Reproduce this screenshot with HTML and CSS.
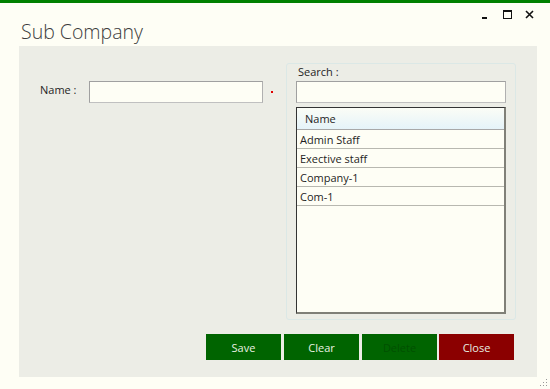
FILE: index.html
```html
<!DOCTYPE html>
<html lang="en">
<head>
    <meta charset="UTF-8">
    <title>Sub Company</title>
    <link rel="stylesheet" href="styles.css">
</head>
<body>
    <div class="window">
        <div class="titlebar">
            <span class="winbtn">
                <svg width="8" height="8" viewBox="0 0 8 8"><rect x="1" y="6" width="5" height="2" fill="#111"/></svg>
            </span>
            <span class="winbtn">
                <svg width="9" height="9" viewBox="0 0 9 9"><rect x="0.5" y="0.5" width="8" height="8" fill="none" stroke="#111"/><rect x="0" y="0" width="9" height="2" fill="#111"/></svg>
            </span>
            <span class="winbtn">
                <svg width="9" height="9" viewBox="0 0 9 9"><path d="M1 1 L8 8 M8 1 L1 8" stroke="#111" stroke-width="1.6"/></svg>
            </span>
        </div>
        <h1 class="title">Sub Company</h1>
        <div class="panel">
            <div class="panel-top">
                <div class="form">
                    <label class="label" for="name">Name :</label>
                    <input id="name" class="textbox name-box" type="text">
                    <span class="required"></span>
                </div>
                <div class="groupbox">
                    <div class="search-label">Search :</div>
                    <input class="textbox search-box" type="text">
                    <div class="grid">
                        <div class="grid-head">Name</div>
                        <div class="grid-row">Admin Staff</div>
                        <div class="grid-row">Exective staff</div>
                        <div class="grid-row">Company-1</div>
                        <div class="grid-row">Com-1</div>
                    </div>
                </div>
            </div>
            <div class="buttons">
                <button class="btn">Save</button>
                <button class="btn btn-clear">Clear</button>
                <button class="btn btn-delete" disabled>Delete</button>
                <button class="btn btn-close">Close</button>
            </div>
        </div>
        <div class="grip">
            <svg width="8" height="8" viewBox="0 0 8 8" fill="#999">
                <rect x="6" y="0" width="1" height="1"/>
                <rect x="3" y="3" width="1" height="1"/><rect x="6" y="3" width="1" height="1"/>
                <rect x="0" y="6" width="1" height="1"/><rect x="3" y="6" width="1" height="1"/><rect x="6" y="6" width="1" height="1"/>
            </svg>
        </div>
    </div>
</body>
</html>
```

FILE: styles.css
```css
body {
    margin: 0;
    background-color: #fefef5;
    font-family: "Open Sans", "Noto Sans", sans-serif;
    font-size: 11px;
    color: #1e1e1e;
}
.window {
    width: 550px;
    height: 389px;
    border-top: 3px solid #008000;
    box-sizing: border-box;
    position: relative;
}
.titlebar {
    height: 16px;
    display: flex;
    justify-content: flex-end;
    align-items: flex-end;
    padding-right: 10px;
}
.winbtn {
    width: 22px;
    display: flex;
    justify-content: center;
}
.title {
    margin: 0;
    padding-left: 21px;
    height: 27px;
    font-weight: 300;
    font-size: 19.5px;
    line-height: 25px;
    color: #3c3c3c;
}
.panel {
    margin-left: 19px;
    width: 518px;
    height: 331px;
    background-color: #ecede6;
    box-sizing: border-box;
    padding: 17px 21px 0 21px;
}
.panel-top {
    display: flex;
}
.form {
    flex: 1;
    display: flex;
    align-items: center;
    padding-top: 18px;
    height: 22px;
}
.label {
    width: 49px;
    padding-bottom: 5px;
}
.textbox {
    box-sizing: border-box;
    height: 22px;
    border: 1px solid #a0a0a0;
    border-right-color: #b0b0b0;
    border-bottom-color: #c0c0c0;
    background-color: #fefef5;
    outline: none;
    margin: 0;
}
.name-box {
    width: 174px;
}
.required {
    width: 2px;
    height: 2px;
    background-color: #e00000;
    margin-left: 8px;
}
.groupbox {
    width: 230px;
    height: 257px;
    box-sizing: border-box;
    border: 1px solid #dbe8e6;
    border-radius: 3px;
    padding: 0 8px 0 9px;
}
.search-label {
    height: 17px;
    line-height: 15px;
    padding-left: 2px;
}
.search-box {
    width: 210px;
    height: 22px;
    display: block;
}
.grid {
    margin-top: 4px;
    width: 210px;
    height: 207px;
    box-sizing: border-box;
    border-top: 1px solid #333;
    border-left: 1px solid #333;
    border-right: 2px solid #808078;
    border-bottom: 2px solid #808078;
    background-color: #fefef5;
}
.grid-head {
    height: 21px;
    line-height: 22px;
    padding-left: 8px;
    background: linear-gradient(#fbfdf6, #e5f3f9);
    border-bottom: 1px solid #a8a8a8;
}
.grid-row {
    height: 18px;
    line-height: 20px;
    padding-left: 3px;
    border-bottom: 1px solid #b8b8b0;
}
.buttons {
    display: flex;
    justify-content: flex-end;
    gap: 3px;
    margin-top: 14px;
    padding-right: 2px;
}
.btn {
    width: 75px;
    height: 26px;
    border: none;
    margin: 0;
    padding: 0;
    background-color: #006400;
    color: #e8f0e0;
    font-family: "Open Sans", "Noto Sans", sans-serif;
    font-size: 11px;
}
.btn-delete {
    color: #005000;
}
.btn-close {
    background-color: #8b0000;
    margin-left: -1px;
}
.grip {
    position: absolute;
    right: 2px;
    bottom: 2px;
    line-height: 0;
}
```
